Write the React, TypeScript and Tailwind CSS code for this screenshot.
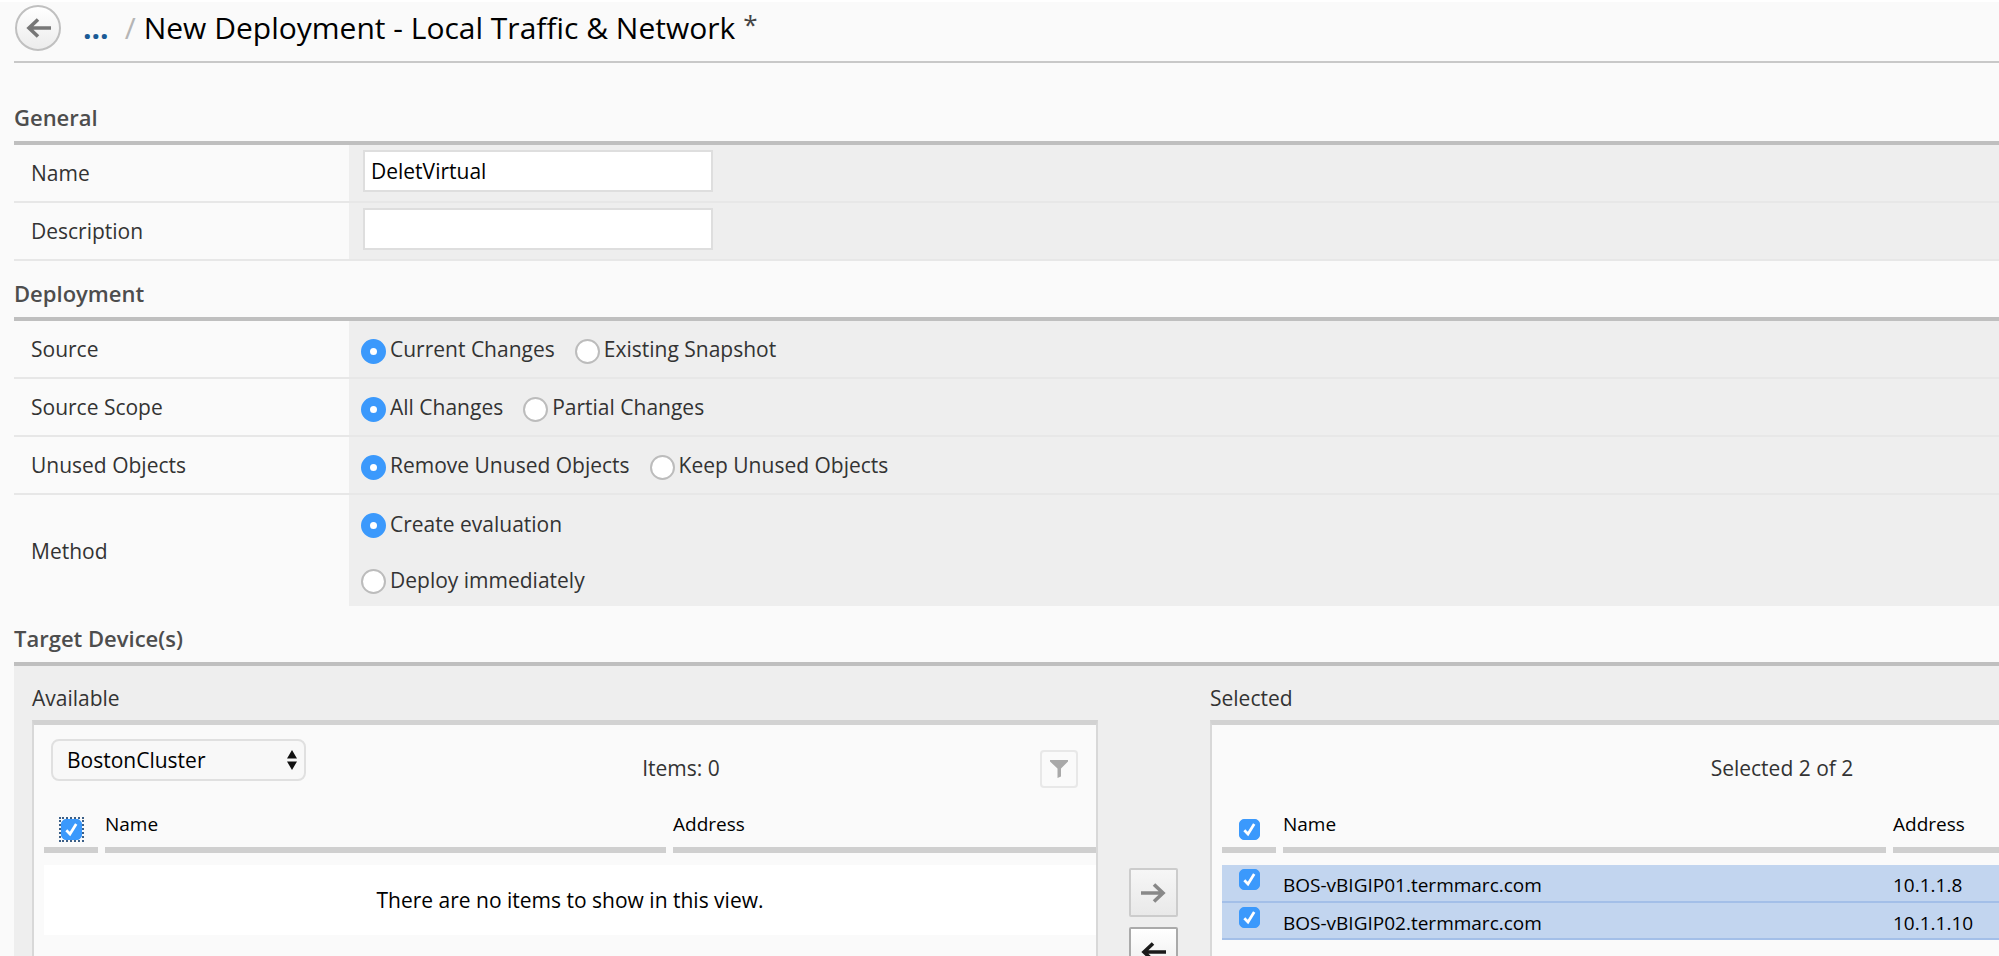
import type { ReactNode } from "react";
import { useState } from "react";

function Checkbox({ label, focused = false }: { label: string; focused?: boolean }) {
  return (
    <span
      className={
        focused
          ? "relative inline-flex outline-2 outline-dotted outline-[#3b5f87]"
          : "relative inline-flex"
      }
    >
      <input
        type="checkbox"
        aria-label={label}
        defaultChecked
        className="peer size-[21px] appearance-none rounded-[5px] border border-[#c3c3c3] bg-white checked:border-[#3b99fc] checked:bg-[#3b99fc]"
      />
      <svg
        viewBox="0 0 21 21"
        className="pointer-events-none absolute inset-0 hidden size-[21px] peer-checked:block"
        fill="none"
        stroke="white"
        strokeWidth="2.7"
      >
        <path d="M5.3 11.2L9 15L15.2 5" />
      </svg>
    </span>
  );
}

function Radio({ name, label, checked = false }: { name: string; label: string; checked?: boolean }) {
  return (
    <label className="flex items-center gap-1">
      <input
        type="radio"
        name={name}
        defaultChecked={checked}
        className="mt-1 size-[25px] appearance-none rounded-full border-2 border-[#bcbcbc] bg-white checked:border-9 checked:border-[#3b99fc]"
      />
      {label}
    </label>
  );
}

function Section({ title, children }: { title: string; children: ReactNode }) {
  return (
    <section>
      <h2 className="border-b-4 border-[#bfbfbf] pb-2 pt-4 text-[22px] leading-8 font-semibold text-[#4d4d4d]">
        {title}
      </h2>
      {children}
    </section>
  );
}

function Row({
  label,
  htmlFor,
  last = false,
  children,
}: {
  label: string;
  htmlFor?: string;
  last?: boolean;
  children: ReactNode;
}) {
  return (
    <div className={last ? "flex" : "flex min-h-[58px] border-b-2 border-[#e7e7e7]"}>
      <div className="flex w-[335px] shrink-0 items-center pl-[17px]">
        {htmlFor ? <label htmlFor={htmlFor}>{label}</label> : label}
      </div>
      <div className="flex flex-1 items-center bg-[#eeeeee] pl-3">{children}</div>
    </div>
  );
}

function TextField({ id, value, onChange }: { id: string; value: string; onChange: (v: string) => void }) {
  return (
    <input
      id={id}
      value={value}
      onChange={(e) => onChange(e.target.value)}
      className="mb-1 ml-0.5 h-[42px] w-[350px] border-2 border-[#dedede] bg-white px-[6px] text-black"
    />
  );
}

function ArrowIcon({ className }: { className: string }) {
  return (
    <svg viewBox="0 0 25 20" className={className} fill="none" stroke="currentColor" strokeWidth="3.6">
      <path d="M25 10H3 M12 1.5L3 10L12 18.5" />
    </svg>
  );
}

function HeadCell({ children, width, last = false }: { children: ReactNode; width: string; last?: boolean }) {
  return (
    <th className={`${width} ${last ? "pr-0" : "pr-[7px]"} pb-3 text-left align-bottom font-normal`}>
      <div className="flex h-[43px] items-start border-b-6 border-[#cfcfcf]">{children}</div>
    </th>
  );
}

const devices = [
  { name: "BOS-vBIGIP01.termmarc.com", address: "10.1.1.8" },
  { name: "BOS-vBIGIP02.termmarc.com", address: "10.1.1.10" },
];

export default function App() {
  const [name, setName] = useState("DeletVirtual");
  const [description, setDescription] = useState("");
  return (
    <main className="h-screen overflow-hidden border-t-2 border-white bg-[#fafafa] pl-[14px] font-['Open_Sans',sans-serif] text-[21px] leading-7 text-[#333333]">
      <header className="flex h-[61px] items-center border-b-2 border-[#c8c8c8] pb-2">
        <button
          type="button"
          aria-label="Back"
          className="ml-[1px] flex size-[46px] items-center justify-center rounded-full border-2 border-[#c0c0c0] bg-linear-to-b from-white to-[#ececec] text-[#777777]"
        >
          <ArrowIcon className="h-5 w-[25px]" />
        </button>
        <a href="#parent" className="ml-[22px] text-[30px] leading-9 font-bold text-[#1a5a96]">
          ...
        </a>
        <span className="ml-4 text-[30px] leading-9 text-[#b5b5b5]">/</span>
        <h1 className="ml-2 text-[30px] leading-9 text-black">
          New Deployment - Local Traffic &amp; Network
        </h1>
        <span className="ml-2 pb-2 text-[26px] leading-8 text-[#444444]">*</span>
      </header>

      <div className="pt-[22px]">
        <Section title="General">
          <Row label="Name" htmlFor="name">
            <TextField id="name" value={name} onChange={setName} />
          </Row>
          <Row label="Description" htmlFor="description">
            <TextField id="description" value={description} onChange={setDescription} />
          </Row>
        </Section>

        <Section title="Deployment">
          <Row label="Source">
            <div className="flex gap-5">
              <Radio name="source" label="Current Changes" checked />
              <Radio name="source" label="Existing Snapshot" />
            </div>
          </Row>
          <Row label="Source Scope">
            <div className="flex gap-5">
              <Radio name="scope" label="All Changes" checked />
              <Radio name="scope" label="Partial Changes" />
            </div>
          </Row>
          <Row label="Unused Objects">
            <div className="flex gap-5">
              <Radio name="unused" label="Remove Unused Objects" checked />
              <Radio name="unused" label="Keep Unused Objects" />
            </div>
          </Row>
          <Row label="Method" last>
            <div className="flex flex-col gap-[27px] pt-[14px] pb-3">
              <Radio name="method" label="Create evaluation" checked />
              <Radio name="method" label="Deploy immediately" />
            </div>
          </Row>
        </Section>

        <Section title="Target Device(s)">
          <div className="grid grid-cols-[1066fr_112px_789fr] bg-[#eeeeee] pl-[18px]">
            <div>
              <h3 className="pb-2 pt-[18px]">Available</h3>
              <div className="h-80 border-x-2 border-t-5 border-x-[#d8d8d8] border-t-[#d2d2d2] bg-[#fafafa]">
                <div className="flex items-start justify-between pl-[17px] pr-[18px] pt-[14px]">
                  <div className="relative">
                    <select
                      aria-label="Device group"
                      className="h-[42px] w-[255px] appearance-none rounded-lg border-2 border-[#e0e0e0] bg-[#f8f8f8] pl-[14px] text-black"
                    >
                      <option>BostonCluster</option>
                    </select>
                    <svg viewBox="0 0 10 20" className="pointer-events-none absolute top-[11px] right-[9px] h-5 w-[10px]">
                      <path d="M5 0L10 8.5H0Z M0 11.5H10L5 20Z" fill="#111111" />
                    </svg>
                  </div>
                  <p className="mt-[15px] ml-4">Items: 0</p>
                  <button
                    type="button"
                    aria-label="Filter"
                    className="mt-[11px] flex size-[38px] items-center justify-center rounded border-2 border-[#e8e8e8]"
                  >
                    <svg viewBox="0 0 18 18" className="size-[18px]">
                      <path d="M0 0H18V1.5L11 8.5V16.5L7.5 18V8.5L0 1.5Z" fill="#a9a9a9" />
                    </svg>
                  </button>
                </div>
                <div className="pl-[10px] pt-[22px]">
                  <table className="w-full table-fixed border-collapse text-[19px] text-black">
                    <thead>
                      <tr>
                        <HeadCell width="w-[61px]">
                          <span className="flex pt-[9px] pl-[17px]">
                            <Checkbox label="Select all available" focused />
                          </span>
                        </HeadCell>
                        <HeadCell width="w-[54%]">Name</HeadCell>
                        <HeadCell width="w-auto" last>Address</HeadCell>
                      </tr>
                    </thead>
                    <tbody>
                      <tr>
                        <td colSpan={3} className="h-[70px] bg-white text-center text-[21px]">
                          There are no items to show in this view.
                        </td>
                      </tr>
                    </tbody>
                  </table>
                </div>
              </div>
            </div>

            <div className="flex flex-col items-center gap-[10px] pt-[202px] pr-0.5">
              <button
                type="button"
                aria-label="Add to selected"
                className="flex size-[49px] items-center justify-center rounded-xs border-2 border-[#cccccc] bg-linear-to-b from-[#f6f6f6] to-[#e9e9e9] text-[#888888]"
              >
                <ArrowIcon className="h-5 w-[25px] rotate-180" />
              </button>
              <button
                type="button"
                aria-label="Remove from selected"
                className="flex size-[49px] items-center justify-center rounded-xs border-2 border-[#aaaaaa] bg-linear-to-b from-white to-[#ececec] text-[#1a1a1a]"
              >
                <ArrowIcon className="h-5 w-[25px]" />
              </button>
            </div>

            <div>
              <h3 className="pb-2 pt-[18px]">Selected</h3>
              <div className="h-80 border-t-5 border-l-2 border-l-[#d8d8d8] border-t-[#d2d2d2] bg-[#fafafa]">
                <p className="pt-[29px] pl-[353px] text-center">Selected 2 of 2</p>
                <div className="pl-[10px] pt-7">
                  <table className="w-full table-fixed border-collapse text-[19px] text-black">
                    <thead>
                      <tr>
                        <HeadCell width="w-[61px]">
                          <span className="flex pt-[9px] pl-[17px]">
                            <Checkbox label="Select all devices" />
                          </span>
                        </HeadCell>
                        <HeadCell width="w-auto">Name</HeadCell>
                        <HeadCell width="w-[106px]" last>Address</HeadCell>
                      </tr>
                    </thead>
                    <tbody>
                      {devices.map((d) => (
                        <tr key={d.name} className="h-[37px] border-b-2 border-[#a3bfe8] bg-[#c2d5ef]">
                          <td className="pl-[17px] align-top">
                            <span className="flex pt-1">
                              <Checkbox label={d.name} />
                            </span>
                          </td>
                          <td className="pt-1">{d.name}</td>
                          <td className="pt-1">{d.address}</td>
                        </tr>
                      ))}
                    </tbody>
                  </table>
                </div>
              </div>
            </div>
          </div>
        </Section>
      </div>
    </main>
  );
}
